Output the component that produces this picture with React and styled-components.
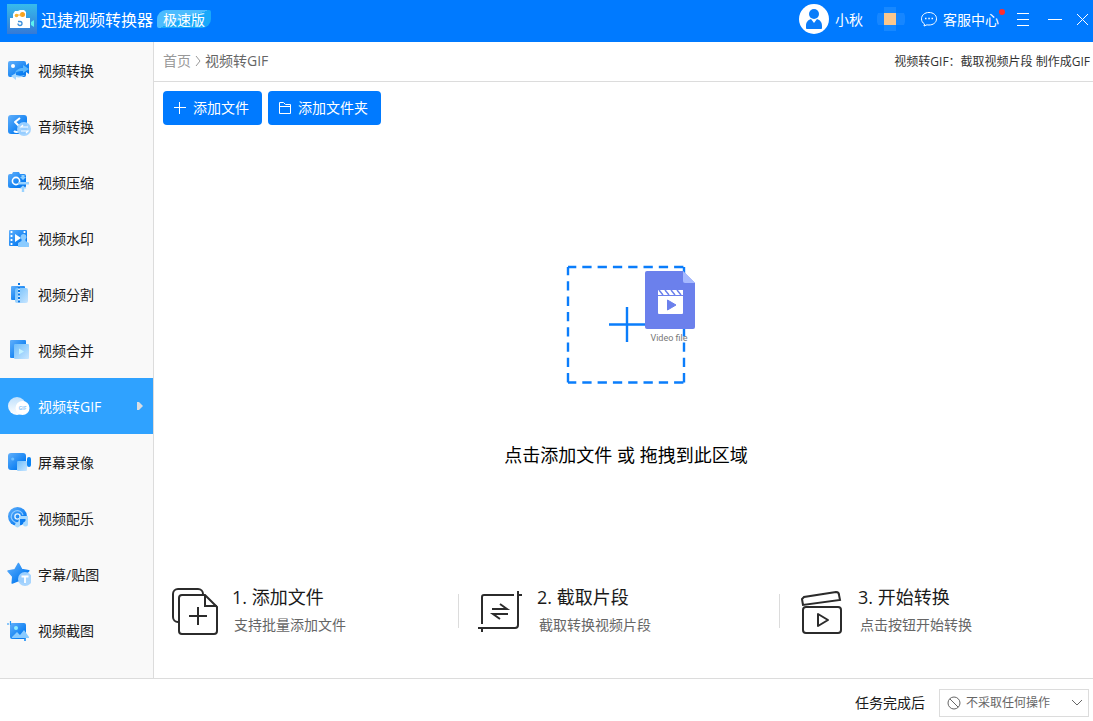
import React, { useState } from 'react'
import styled, { createGlobalStyle } from 'styled-components'

const navItems = [
    { id: 'convert', label: '视频转换' },
    { id: 'audio', label: '音频转换' },
    { id: 'compress', label: '视频压缩' },
    { id: 'watermark', label: '视频水印' },
    { id: 'split', label: '视频分割' },
    { id: 'merge', label: '视频合并' },
    { id: 'gif', label: '视频转GIF' },
    { id: 'record', label: '屏幕录像' },
    { id: 'music', label: '视频配乐' },
    { id: 'subtitle', label: '字幕/贴图' },
    { id: 'capture', label: '视频截图' },
]

// 24x24 drawings, "dark" and "pale" are the shared gradients from <Gradients />
const navIcons = {
    convert: (
        <>
            <path d="M3 3h14a2 2 0 0 1 2 2v2l3-2v11l-3-2v3a2 2 0 0 1-2 2H3a2 2 0 0 1-2-2V5a2 2 0 0 1 2-2z" fill="url(#dark)" />
            <circle cx="6" cy="8" r="2" fill="#fff" />
            <path d="M8 15c1-3 4-5 8-5V7l6 4-6 4v-2c-3 0-5 0-8 2z" fill="#5cb8fd" />
            <path d="M18 17c-2 2-6 3-9 2v3l-5-4 5-3v2c4 1 6 1 9 0z" fill="#a5d8ff" />
        </>
    ),
    audio: (
        <>
            <rect x="1" y="1" width="19" height="19" rx="3" fill="url(#dark)" />
            <path d="M13 4L8 8l5 5c1 2-1 5-3 5-1 0-2 0-3-1" fill="none" stroke="#fff" strokeWidth="2" strokeLinejoin="round" />
            <circle cx="17" cy="15" r="7" fill="#9fd2ff" opacity=".95" />
            <path d="M21 13h-7l2-2M14 17h7l-2 2" fill="none" stroke="#fff" strokeWidth="1.2" />
        </>
    ),
    compress: (
        <>
            <path d="M3 4h2l1-2h6l1 2h4a2 2 0 0 1 2 2v10a2 2 0 0 1-2 2H3a2 2 0 0 1-2-2V6a2 2 0 0 1 2-2z" fill="url(#dark)" />
            <circle cx="9" cy="11" r="3.6" fill="none" stroke="#fff" strokeWidth="1.6" />
            <path d="M14.500 5v2H13l3 3 3-3h-1.500V5z" fill="#8fd0ff" />
            <path d="M11 12h11v2.400H11zM16 15.500l3.500 3h-2.300V22h-2.400v-3.500h-2.300z" fill="#9ad3ff" />
        </>
    ),
    watermark: (
        <>
            <rect x="2" y="4" width="18" height="16" rx="1" fill="url(#dark)" />
            <path d="M4.500 5v14M17.500 5v6" stroke="#fff" strokeWidth="1.800" strokeDasharray="2 2" />
            <path d="M8 8l6 4-6 4z" fill="#fff" />
            <path d="M16.500 8a3 3 0 0 1 2 5.200V15l3.500 2v4H11v-4l3.500-2v-1.800a3 3 0 0 1 2-5.200z" fill="#8acbff" />
        </>
    ),
    split: (
        <>
            <rect x="4" y="4" width="14" height="14" rx="1" fill="url(#dark)" />
            <rect x="8" y="6" width="13" height="15" rx="2" fill="url(#pale)" />
            <path d="M12 1v21" stroke="#fff" strokeWidth="2" opacity=".6" />
            <path d="M12 1v21" stroke="#0a78e6" strokeWidth="2" strokeDasharray="2 1.500" />
        </>
    ),
    merge: (
        <>
            <rect x="3" y="2" width="16" height="18" rx="1" fill="url(#dark)" />
            <rect x="7" y="6" width="15" height="15" rx="1" fill="url(#pale)" />
            <path d="M12 10.500l5 3-5 3z" fill="#c4f2ff" />
        </>
    ),
    gif: (
        <>
            <circle cx="10" cy="12" r="9" fill="url(#white)" />
            <circle cx="15.500" cy="14" r="7" fill="#fff" />
            <text x="15.500" y="16" textAnchor="middle" fontSize="5" fontWeight="700" fill="#8ec9f8">GIF</text>
        </>
    ),
    record: (
        <>
            <rect x="1" y="3" width="18" height="17" rx="3" fill="url(#dark)" />
            <circle cx="5.700" cy="9" r="1.600" fill="#6fc0ff" />
            <rect x="10" y="11" width="10" height="10" rx="1" fill="url(#pale)" />
            <rect x="20" y="7" width="4" height="10" rx="2" fill="#0a84f5" />
        </>
    ),
    music: (
        <>
            <circle cx="10.500" cy="10.500" r="9.500" fill="url(#dark)" />
            <path d="M16 9a6 6 0 1 0-3 7" fill="none" stroke="#8fcbff" strokeWidth="1.200" />
            <circle cx="10.500" cy="10.500" r="2.600" fill="none" stroke="#e4f4ff" strokeWidth="1.400" />
            <path d="M13 10h8v8a2.500 2.500 0 1 1-2.500-2.500V13H13v6a2.500 2.500 0 1 1-2-2.500z" fill="#a8daff" />
        </>
    ),
    subtitle: (
        <>
            <path d="M11.500 1.500l3.300 6 7 1.300-4.800 5.200.8 7-6.300-2.500L5.200 21l.6-6.600L1 9l6.800-1.200z" fill="url(#dark)" stroke="url(#dark)" strokeWidth="1.500" strokeLinejoin="round" />
            <circle cx="18" cy="17" r="7" fill="#a3d3fe" opacity=".95" />
            <path d="M14.500 14.500h7M18 14.500V21" stroke="#fff" strokeWidth="1.800" />
        </>
    ),
    capture: (
        <>
            <rect x="3" y="5" width="16" height="16" rx="2" fill="url(#dark)" />
            <path d="M0 6h2M3.500 3v4" stroke="#2196f9" strokeWidth="1.200" />
            <circle cx="9" cy="10" r="2" fill="#8cecff" />
            <path d="M5 19l5-5 3 3 4-5 5 7v1H5z" fill="#8acbff" />
            <path d="M18 20v3" stroke="#0a84f5" strokeWidth="1.500" />
        </>
    ),
}

const Gradients = () => (
    <HiddenSvg aria-hidden="true">
        <defs>
            <linearGradient id="dark" x1="0" y1="0" x2="1" y2="1">
                <stop offset="0" stopColor="#62b0fb" />
                <stop offset=".7" stopColor="#0d7ff2" />
                <stop offset="1" stopColor="#0a76ea" />
            </linearGradient>
            <linearGradient id="pale" x1="0" y1="0" x2="1" y2="1">
                <stop offset="0" stopColor="#6dbdfb" />
                <stop offset="1" stopColor="#c9e6ff" />
            </linearGradient>
            <linearGradient id="white" x1="0" y1="0" x2="0" y2="1">
                <stop offset="0" stopColor="#bfe0fd" />
                <stop offset="1" stopColor="#ffffff" />
            </linearGradient>
            <linearGradient id="logo" x1="0" y1="0" x2="0" y2="1">
                <stop offset="0" stopColor="#37bbec" />
                <stop offset="1" stopColor="#3579d6" />
            </linearGradient>
        </defs>
    </HiddenSvg>
)

const Logo = () => (
    <svg width="30" height="30" viewBox="0 0 30 30" aria-hidden="true">
        <rect width="30" height="30" fill="url(#logo)" />
        <path d="M3 14h3v-4l2-3h3l2-1h4l2 2v6h4v10H3z" fill="#fff" />
        <path d="M24 18l3-2v7l-3-2z" fill="#5cf0f0" />
        <circle cx="9.500" cy="11.500" r="1.800" fill="#f8b233" />
        <circle cx="15.500" cy="10.500" r="2.500" fill="#f8a11c" />
        <path d="M10 11l5 0" stroke="#f8b233" />
        <path d="M11 17.500h2a2 2 0 1 1-2 2" fill="none" stroke="#3a8fdc" strokeWidth="1.300" />
    </svg>
)

const Avatar = () => (
    <svg width="30" height="30" viewBox="0 0 30 30" aria-hidden="true">
        <circle cx="15" cy="15" r="15" fill="#fff" />
        <circle cx="15" cy="10" r="5" fill="#0a7cfa" />
        <path d="M7 24v-2c0-4 2-6 5-7l3 4 3-4c3 1 5 3 5 7v2c0 1-1 1-1 1H8s-1 0-1-1z" fill="#0a7cfa" />
    </svg>
)

const Mosaic = () => (
    <svg width="30" height="26" viewBox="0 0 30 26" aria-hidden="true">
        <path d="M7 1h12v24H7z" fill="#1788ff" />
        <path d="M1 7h26l1 3v6l-1 3H1l-1-3v-6z" fill="#1686ff" />
        <path d="M7 7h12v12H7z" fill="#fbc78c" />
    </svg>
)

const DropArt = () => (
    <svg width="140" height="120" viewBox="0 0 140 120" aria-hidden="true">
        <path d="M12 2h116M12 117.500h116M12 2v116M128 2v116" fill="none" stroke="#0a7dfb" strokeWidth="2.400" strokeDasharray="9.300 6" strokeDashoffset="1" />
        <path d="M53 59.500h36M71 42v35" stroke="#0a7dfb" strokeWidth="2.400" />
        <path d="M91 6h36l12 12v44a2 2 0 0 1-2 2H91a2 2 0 0 1-2-2V8a2 2 0 0 1 2-2z" fill="#6b80ec" />
        <path d="M127 6l12 12h-10a2 2 0 0 1-2-2z" fill="#a6b9ff" />
        <path d="M102 25h25v5h-25zM102 31h25v17a1 1 0 0 1-1 1h-23a1 1 0 0 1-1-1z" fill="#fff" />
        <path d="M103 25l4 5M109 25l4 5M115 25l4 5M121 25l4 5" stroke="#6b80ec" strokeWidth="1.500" />
        <path d="M111.500 35l8.500 5-8.500 5z" fill="#6b80ec" stroke="#6b80ec" strokeLinejoin="round" />
        <VideoText x="113" y="76">Video file</VideoText>
    </svg>
)

const stepIcons = {
    add: (
        <>
            <path d="M7 35H6a5 5 0 0 1-5-5V7a5 5 0 0 1 5-5h20a5 5 0 0 1 5 5" />
            <path d="M10 8h23l12 12v24a3 3 0 0 1-3 3H10a3 3 0 0 1-3-3V11a3 3 0 0 1 3-3zM33 8v11h12" />
            <path d="M26 20v18M17 29h18" />
        </>
    ),
    cut: (
        <>
            <path d="M5 37V10a2 2 0 0 1 2-2h30M41 4v34a3 3 0 0 1-3 3H1M5 41v4M41 8h4" />
            <path d="M15 22h15l-7-5M31 27H16l7 5" />
        </>
    ),
    play: (
        <>
            <rect x="5" y="20" width="38" height="26" rx="3" />
            <path d="M5 18L4 12l2-2 32-5c2 0 3 1 3 3l1 5z" />
            <path d="M20 27v12l10-6z" strokeLinejoin="round" />
        </>
    ),
}

const steps = [
    { icon: 'add', title: '1. 添加文件', text: '支持批量添加文件' },
    { icon: 'cut', title: '2. 截取片段', text: '截取转换视频片段' },
    { icon: 'play', title: '3. 开始转换', text: '点击按钮开始转换' },
]

function App() {
    const [active, setActive] = useState('gif')
    const [after, setAfter] = useState('none')

    return (
        <Page>
            <GlobalStyle />
            <Gradients />
            <Header>
                <Brand>
                    <Logo />
                    <BrandName>迅捷视频转换器</BrandName>
                    <Edition>极速版</Edition>
                </Brand>
                <HeaderTools>
                    <HeaderButton>
                        <Avatar />
                        <Label>小秋</Label>
                    </HeaderButton>
                    <Mosaic />
                    <ServiceButton>
                        <svg width="16" height="16" viewBox="0 0 16 16" fill="none" stroke="#fff" aria-hidden="true">
                            <path d="M3.500 13C1.500 11.800.5 10 .5 7.800.5 4 3.800 1.500 8 1.500s7.500 2.500 7.500 6.300S12.200 14 8 14c-.8 0-1.500 0-2-.2L3 15z" />
                            <path d="M4 7.500h1.500M7.300 7.500h1.500M10.500 7.500H12" strokeWidth="1.500" />
                        </svg>
                        <Label>客服中心</Label>
                        <RedDot />
                    </ServiceButton>
                    <HeaderButton aria-label="菜单">
                        <LineIcon width="16" height="16"><path d="M1 2.500h12M1 8.500h12M1 14.500h12" /></LineIcon>
                    </HeaderButton>
                    <HeaderButton aria-label="最小化">
                        <LineIcon width="16" height="16"><path d="M2 8.500h14" /></LineIcon>
                    </HeaderButton>
                    <HeaderButton aria-label="关闭">
                        <LineIcon width="14" height="16"><path d="M1 3l11 11M12 3L1 14" /></LineIcon>
                    </HeaderButton>
                </HeaderTools>
            </Header>

            <Body>
                <Sidebar>
                    {navItems.map(item => (
                        <NavItem
                            key={item.id}
                            $active={item.id === active}
                            onClick={() => setActive(item.id)}
                        >
                            <svg width="24" height="24" viewBox="0 0 24 24" aria-hidden="true">{navIcons[item.id]}</svg>
                            <NavLabel>{item.label}</NavLabel>
                            {item.id === active && (
                                <svg width="6" height="8" viewBox="0 0 6 8" aria-hidden="true"><path d="M0 0h2l4 4-4 4H0z" fill="#d9dde2" /></svg>
                            )}
                        </NavItem>
                    ))}
                </Sidebar>

                <Main>
                    <Crumbs>
                        <HomeLink href="#">首页</HomeLink>
                        <svg width="6" height="12" viewBox="0 0 6 12" fill="none" stroke="#999" aria-hidden="true"><path d="M1 1l4 5-4 5" /></svg>
                        <Current>视频转GIF</Current>
                        <Hint>视频转GIF：截取视频片段 制作成GIF</Hint>
                    </Crumbs>
                    <Content>
                        <Toolbar>
                            <AddButton>
                                <LineIcon width="14" height="14"><path d="M1 6.500h12M6.500 1v12" /></LineIcon>
                                添加文件
                            </AddButton>
                            <AddButton>
                                <LineIcon width="14" height="14"><path d="M1.500 12.500v-11h4l2 2h5v9zM1.500 5.500h11" /></LineIcon>
                                添加文件夹
                            </AddButton>
                        </Toolbar>
                        <DropZone>
                            <DropArt />
                            点击添加文件 或 拖拽到此区域
                        </DropZone>
                        <Steps>
                            {steps.map((step, i) => (
                                <React.Fragment key={step.icon}>
                                    {i > 0 && <Divider />}
                                    <Step $first={i === 0}>
                                        <StepIcon viewBox="0 0 48 48" aria-hidden="true">{stepIcons[step.icon]}</StepIcon>
                                        <div>
                                            <StepTitle>{step.title}</StepTitle>
                                            <StepText>{step.text}</StepText>
                                        </div>
                                    </Step>
                                </React.Fragment>
                            ))}
                        </Steps>
                    </Content>
                </Main>
            </Body>

            <Footer>
                <label htmlFor="after">任务完成后</label>
                <SelectBox>
                    <svg width="14" height="14" viewBox="0 0 14 14" fill="none" stroke="#666" aria-hidden="true">
                        <circle cx="7" cy="7" r="6" />
                        <path d="M2.800 2.800l8.400 8.400" />
                    </svg>
                    <Select id="after" value={after} onChange={e => setAfter(e.target.value)}>
                        <option value="none">不采取任何操作</option>
                    </Select>
                    <svg width="12" height="8" viewBox="0 0 12 8" fill="none" stroke="#666" aria-hidden="true"><path d="M1 1l5 5 5-5" /></svg>
                </SelectBox>
            </Footer>
        </Page>
    )
}

const GlobalStyle = createGlobalStyle`
    *{
        box-sizing: border-box;
    }
    body{
        margin: 0;
        background: #fff;
        color: #1a1a1a;
        font: 14px/20px "Open Sans", "Noto Sans CJK SC", sans-serif;
    }
    button, select{
        font: inherit;
        color: inherit;
        border: none;
        padding: 0;
        background: transparent;
        cursor: pointer;
    }
    svg{
        display: block;
        flex: none;
    }
`;

const HiddenSvg = styled.svg`
    position: absolute;
    width: 0;
    height: 0;
`;

const LineIcon = styled.svg`
    fill: none;
    stroke: #fff;
`;

const Page = styled.div`
    min-height: 100vh;
    display: flex;
    flex-direction: column;
`;

const Header = styled.header`
    height: 42px;
    padding: 0 3px 4px 7px;
    display: flex;
    align-items: center;
    justify-content: space-between;
    background: #007aff;
    color: #fff;
`;

const Brand = styled.div`
    display: flex;
    align-items: center;
    gap: 4px;
`;

const Label = styled.span`
    padding-top: 2px;
`;

const BrandName = styled(Label)`
    font-size: 16px;
`;

const Edition = styled.span`
    height: 18px;
    padding: 0 6px;
    line-height: 20px;
    border-radius: 9px 2px;
    background: linear-gradient(160deg, #4cbcff 50%, #18a8fa 50%);
`;

const HeaderTools = styled.div`
    display: flex;
    align-items: center;
    gap: 14px;
`;

const HeaderButton = styled.button`
    display: flex;
    align-items: center;
    gap: 6px;
`;

const ServiceButton = styled(HeaderButton)`
    position: relative;
    padding-right: 3px;
`;

const RedDot = styled.i`
    position: absolute;
    top: 1px;
    right: -3px;
    width: 6px;
    height: 6px;
    border-radius: 50%;
    background: #ff2d2d;
`;

const Body = styled.div`
    flex: 1;
    display: flex;
`;

const Sidebar = styled.nav`
    width: 154px;
    flex: none;
    background: #f9f9f9;
    border-right: 1px solid #dcdcdc;
`;

const NavItem = styled.button`
    width: 100%;
    height: 56px;
    padding: 0 10px 0 7px;
    display: flex;
    align-items: center;
    gap: 7px;
    text-align: left;
    background: ${({ $active }) => ($active ? '#2fa2ff' : 'transparent')};
    color: ${({ $active }) => ($active ? '#fff' : '#1a1a1a')};
`;

const NavLabel = styled(Label)`
    flex: 1;
`;

const Main = styled.main`
    flex: 1;
    display: flex;
    flex-direction: column;
`;

const Crumbs = styled.div`
    height: 40px;
    padding: 0 3px 2px 9px;
    display: flex;
    align-items: center;
    gap: 4px;
    border-bottom: 1px solid #dcdcdc;
`;

const HomeLink = styled.a`
    color: #999;
    text-decoration: none;
`;

const Current = styled.span`
    color: #666;
`;

const Hint = styled.span`
    margin-left: auto;
    padding-top: 2px;
    font-size: 12px;
    color: #333;
`;

const Content = styled.div`
    flex: 1;
    padding: 9px 4px 39px 9px;
    display: flex;
    flex-direction: column;
`;

const Toolbar = styled.div`
    display: flex;
    gap: 6px;
`;

const AddButton = styled.button`
    height: 34px;
    padding: 0 13px 0 10px;
    display: flex;
    align-items: center;
    gap: 6px;
    border-radius: 4px;
    background: #007aff;
    color: #fff;
`;

const DropZone = styled.button`
    flex: 1;
    padding-top: 24px;
    display: flex;
    flex-direction: column;
    align-items: center;
    justify-content: center;
    gap: 58px;
    font-size: 18px;
    line-height: 24px;
    color: #000;
`;

const VideoText = styled.text`
    font: 9px Roboto, sans-serif;
    text-anchor: middle;
    fill: #777;
`;

const Steps = styled.div`
    display: grid;
    grid-template-columns: 295fr 1px 320fr 1px 309fr;
    align-items: center;
`;

const Divider = styled.span`
    height: 34px;
    background: #dcdcdc;
`;

const Step = styled.div`
    display: flex;
    align-items: center;
    gap: 12px;
    padding-left: ${({ $first }) => ($first ? '9px' : '18px')};
`;

const StepIcon = styled.svg`
    width: 48px;
    height: 48px;
    fill: none;
    stroke: #2b2b2b;
    stroke-width: 2;
`;

const StepTitle = styled.div`
    font-size: 18px;
    line-height: 28px;
`;

const StepText = styled.div`
    padding-left: 2px;
    line-height: 28px;
    color: #666;
`;

const Footer = styled.footer`
    height: 43px;
    padding: 6px 4px 0;
    display: flex;
    align-items: center;
    justify-content: flex-end;
    gap: 14px;
    border-top: 1px solid #dcdcdc;
`;

const SelectBox = styled.div`
    width: 150px;
    height: 28px;
    padding: 0 5px 0 7px;
    display: flex;
    align-items: center;
    gap: 5px;
    border: 1px solid #dcdcdc;
`;

const Select = styled.select`
    flex: 1;
    min-width: 0;
    appearance: none;
    outline: none;
    font-size: 12px;
    color: #666;
`;

export default App
